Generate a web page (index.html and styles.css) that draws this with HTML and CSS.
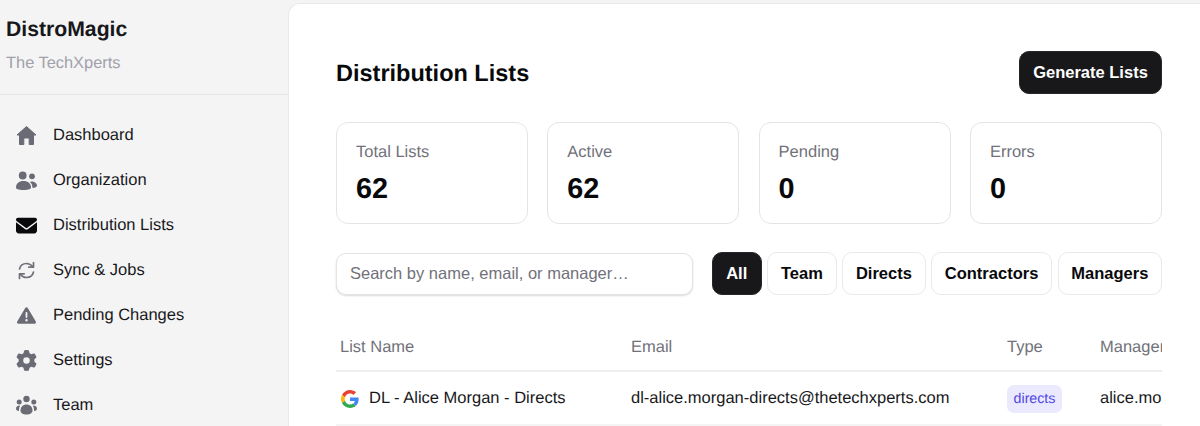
FILE: index.html
```html
<!DOCTYPE html>
<html lang="en">
<head>
<meta charset="utf-8">
<title>DistroMagic</title>
<link rel="stylesheet" href="styles.css">
</head>
<body>
<div class="app">
  <aside class="sidebar">
    <div class="brand">
      <div class="brand-name">DistroMagic</div>
      <div class="brand-org">The TechXperts</div>
    </div>
    <nav class="nav">
      <a class="nav-item"><svg class="icon" viewBox="0 0 21 21"><path class="fill house" d="M10.500 1.500 20 10h-2.500v9.500h-4.300V13H7.800v6.500H3.500V10H1z"/></svg><span>Dashboard</span></a>
      <a class="nav-item"><svg class="icon" viewBox="0 0 21 21"><circle class="fill" cx="6.700" cy="5.500" r="3.900"/><circle class="fill" cx="16" cy="6.300" r="2.900"/><path class="fill" d="M0 17.500C0 13.500 3 11 7.500 11S15 13.500 15 17.500C15 19 13 20 7.500 20S0 19 0 17.500Z"/><path class="fill" d="M15.500 11.500C18.500 11.500 21 13.500 21 15.500 21 17 19 18 16.500 18 16.500 15 15.500 13 13.800 12 14.300 11.700 15 11.500 15.500 11.500Z"/></svg><span>Organization</span></a>
      <a class="nav-item"><svg class="icon icon-dark" viewBox="0 0 512 512"><path d="M48 64C21.500 64 0 85.500 0 112c0 15.100 7.100 29.300 19.200 38.400L236.800 313.600c11.400 8.500 27 8.500 38.400 0L492.800 150.400c12.100-9.100 19.200-23.300 19.200-38.400c0-26.500-21.500-48-48-48H48zM0 176V384c0 35.300 28.700 64 64 64H448c35.300 0 64-28.700 64-64V176L294.400 339.200c-22.800 17.100-54 17.100-76.800 0L0 176z"/></svg><span>Distribution Lists</span></a>
      <a class="nav-item"><svg class="icon icon-line" viewBox="0 0 21 21"><path d="M3.500 9C4.300 5.500 7 3.500 10.500 3.500 13 3.500 15 4.500 16.800 6.800"/><path d="M17.500 2.500v4.700h-4.700"/><path d="M17.500 12C16.700 15.500 14 17.500 10.500 17.500 8 17.500 6 16.500 4.200 14.200"/><path d="M3.500 18.500v-4.700h4.700"/></svg><span>Sync &amp; Jobs</span></a>
      <a class="nav-item"><svg class="icon icon-tri" viewBox="0 0 512 512"><path class="fill" d="M256 32c14.200 0 27.300 7.500 34.500 19.800l216 368c7.300 12.400 7.300 27.700 .2 40.100S486.300 480 472 480H40c-14.300 0-27.600-7.700-34.700-20.100s-7-27.800 .2-40.100l216-368C228.700 39.500 241.800 32 256 32zm0 128c-13.300 0-24 10.700-24 24V296c0 13.300 10.700 24 24 24s24-10.700 24-24V184c0-13.300-10.700-24-24-24zm32 224a32 32 0 1 0 -64 0 32 32 0 1 0 64 0z"/></svg><span>Pending Changes</span></a>
      <a class="nav-item"><svg class="icon" viewBox="0 0 512 512"><path class="fill" d="M495.900 166.600c3.200 8.700 .5 18.400-6.400 24.600l-43.300 39.400c1.100 8.300 1.700 16.800 1.700 25.400s-.6 17.100-1.700 25.400l43.300 39.400c6.900 6.200 9.600 15.900 6.400 24.600c-4.400 11.900-9.700 23.300-15.800 34.300l-4.700 8.100c-6.600 11-14 21.400-22.100 31.200c-5.900 7.200-15.700 9.600-24.500 6.800l-55.700-17.700c-13.400 10.300-28.200 18.900-44 25.400l-12.500 57.100c-2 9.100-9 16.300-18.200 17.800c-13.800 2.300-28 3.500-42.500 3.500s-28.700-1.200-42.500-3.500c-9.200-1.500-16.200-8.700-18.200-17.800l-12.500-57.100c-15.800-6.500-30.600-15.100-44-25.400L83.100 425.900c-8.800 2.800-18.600 .3-24.500-6.800c-8.100-9.800-15.500-20.200-22.100-31.200l-4.700-8.100c-6.100-11-11.400-22.400-15.800-34.300c-3.200-8.700-.5-18.400 6.400-24.600l43.300-39.400C64.600 273.100 64 264.600 64 256s.6-17.100 1.700-25.400L22.400 191.200c-6.900-6.200-9.600-15.900-6.400-24.600c4.400-11.900 9.700-23.300 15.800-34.300l4.700-8.100c6.600-11 14-21.400 22.100-31.200c5.900-7.200 15.700-9.600 24.500-6.800l55.700 17.700c13.400-10.300 28.200-18.900 44-25.400l12.500-57.100c2-9.100 9-16.300 18.200-17.800C227.300 1.200 241.500 0 256 0s28.700 1.200 42.500 3.500c9.200 1.500 16.200 8.700 18.200 17.800l12.500 57.100c15.800 6.500 30.600 15.100 44 25.400l55.700-17.700c8.800-2.800 18.600-.3 24.500 6.800c8.100 9.800 15.500 20.200 22.100 31.200l4.700 8.100c6.100 11 11.400 22.400 15.800 34.300zM256 336a80 80 0 1 0 0-160 80 80 0 1 0 0 160z"/></svg><span>Settings</span></a>
      <a class="nav-item"><svg class="icon" viewBox="0 0 21 21"><circle class="fill" cx="10.500" cy="4" r="3.200"/><circle class="fill" cx="3.200" cy="7" r="2.500"/><circle class="fill" cx="17.800" cy="7" r="2.500"/><path class="fill" d="M4.500 15.500C4.500 11.800 7 9.500 10.500 9.500S16.500 11.800 16.500 15.500C16.500 18 14 19.500 10.500 19.500S4.500 18 4.500 15.500Z"/><path class="fill" d="M0 13.500C0 11.500 1.500 10.500 4.200 10.500 3.300 12 2.900 13.800 3 16 1 15.800 0 15 0 13.500Z"/><path class="fill" d="M21 13.500C21 11.500 19.500 10.500 16.800 10.500 17.700 12 18.100 13.800 18 16 20 15.800 21 15 21 13.500Z"/></svg><span>Team</span></a>
    </nav>
  </aside>
  <main class="main">
    <header class="page-head">
      <h1 class="title">Distribution Lists</h1>
      <button class="btn-primary" type="button">Generate Lists</button>
    </header>
    <section class="stats">
      <div class="stat"><div class="stat-label">Total Lists</div><div class="stat-value">62</div></div>
      <div class="stat"><div class="stat-label">Active</div><div class="stat-value">62</div></div>
      <div class="stat"><div class="stat-label">Pending</div><div class="stat-value">0</div></div>
      <div class="stat"><div class="stat-label">Errors</div><div class="stat-value">0</div></div>
    </section>
    <section class="toolbar">
      <input class="search" type="text" placeholder="Search by name, email, or manager…">
      <div class="filters">
        <button class="filter filter-on" type="button">All</button>
        <button class="filter" type="button">Team</button>
        <button class="filter" type="button">Directs</button>
        <button class="filter" type="button">Contractors</button>
        <button class="filter" type="button">Managers</button>
      </div>
    </section>
    <div class="table-wrap">
      <table class="table">
        <colgroup><col class="c-name"><col class="c-email"><col class="c-type"><col class="c-mgr"></colgroup>
        <thead><tr><th>List Name</th><th>Email</th><th>Type</th><th>Manager</th></tr></thead>
        <tbody>
          <tr>
            <td><div class="name-cell"><svg class="g-logo" viewBox="0 0 48 48"><path fill="#EA4335" d="M24 9.500c3.540 0 6.710 1.220 9.210 3.600l6.850-6.850C35.900 2.380 30.470 0 24 0 14.620 0 6.510 5.380 2.560 13.220l7.980 6.190C12.430 13.720 17.740 9.500 24 9.500z"/><path fill="#4285F4" d="M46.980 24.550c0-1.570-.15-3.090-.38-4.550H24v9.020h12.940c-.58 2.960-2.260 5.480-4.780 7.180l7.730 6c4.510-4.180 7.090-10.360 7.090-17.650z"/><path fill="#FBBC05" d="M10.530 28.590c-.48-1.450-.76-2.990-.76-4.590s.27-3.140.76-4.590l-7.980-6.190C.92 16.460 0 20.120 0 24c0 3.880.92 7.540 2.560 10.780l7.970-6.190z"/><path fill="#34A853" d="M24 48c6.480 0 11.930-2.130 15.890-5.810l-7.730-6c-2.150 1.450-4.920 2.300-8.160 2.300-6.260 0-11.570-4.220-13.470-9.910l-7.980 6.190C6.510 42.620 14.620 48 24 48z"/></svg><span>DL - Alice Morgan - Directs</span></div></td>
            <td>dl-alice.morgan-directs@thetechxperts.com</td>
            <td><span class="badge">directs</span></td>
            <td>alice.morgan@thetechxperts.com</td>
          </tr>
        </tbody>
      </table>
    </div>
  </main>
</div>
</body>
</html>
```
FILE: styles.css
```css
* { box-sizing: border-box; }
html, body { margin: 0; height: 100%; overflow: hidden; }
body {
  background: #f4f4f5;
  color: #18181b;
  font-family: "Liberation Sans", Arial, sans-serif;
  text-rendering: geometricPrecision;
}
.app { display: flex; height: 426px; }
.sidebar { width: 288px; flex: none; }
.brand { height: 95px; padding: 17px 6px 0; border-bottom: 1px solid #e4e4e7; }
.brand-name { font-size: 21.200px; font-weight: 700; line-height: 26px; }
.brand-org { font-size: 16.400px; line-height: 20px; margin-top: 10px; color: #a1a1aa; }
.nav { display: flex; flex-direction: column; padding: 18px 16px 0; }
.nav-item { display: flex; align-items: center; gap: 16px; height: 45px; font-size: 16.500px; color: #18181b; }
.icon { width: 21px; height: 21px; flex: none; }
.icon-tri { width: 19px; height: 19px; margin: 0 1px; }
.fill { fill: #6b6b76; }
.house { stroke: #6b6b76; stroke-width: 1; stroke-linejoin: round; }
.icon-dark { fill: #09090b; }
.icon-line { fill: none; stroke: #71717a; stroke-width: 1.700; stroke-linecap: round; stroke-linejoin: round; }
.main {
  flex: 1;
  min-width: 0;
  margin-top: 3px;
  padding: 47px 38px 0 47px;
  background: #fff;
  border: 1px solid #e9e9eb;
  border-width: 1px 0 0 1px;
  border-top-left-radius: 12px;
  overflow: hidden;
}
.page-head { display: flex; justify-content: space-between; align-items: center; height: 43px; }
.title { margin: 1px 0 0; font-size: 23.500px; font-weight: 700; color: #09090b; }
.btn-primary {
  height: 43px;
  width: 143px;
  border: 1px solid #27272a;
  border-radius: 10px;
  background: #18181b;
  color: #fff;
  font: 700 16.500px "Liberation Sans", Arial, sans-serif;
}
.stats { display: grid; grid-template-columns: repeat(4, 1fr); gap: 19.200px; margin-top: 28px; }
.stat { height: 102px; padding: 19px; border: 1px solid #e4e4e7; border-radius: 12px; }
.stat-label { font-size: 16.500px; line-height: 20px; color: #71717a; }
.stat-value { margin-top: 11px; font-size: 28.800px; line-height: 33px; font-weight: 700; color: #09090b; }
.toolbar { display: flex; align-items: center; justify-content: space-between; margin-top: 28px; }
.search {
  width: 357px;
  height: 42px;
  padding: 0 13px;
  border: 1px solid #e4e4e7;
  border-radius: 10px;
  background: #fff;
  box-shadow: 0 1px 2px rgba(0, 0, 0, .15);
  font: 16.500px "Liberation Sans", Arial, sans-serif;
  color: #18181b;
}
.search::placeholder { color: #71717a; opacity: 1; }
.filters { display: flex; gap: 5.600px; }
.filter {
  height: 43px;
  padding: 0 12.700px;
  border: 1px solid #e9e9eb;
  border-radius: 10px;
  background: #fff;
  color: #09090b;
  font: 700 16.500px "Liberation Sans", Arial, sans-serif;
}
.filter-on { width: 50px; background: #18181b; border-color: #27272a; color: #fff; }
.table-wrap { margin-top: 29px; overflow: hidden; }
.table { border-collapse: collapse; table-layout: fixed; width: 1060px; font-size: 16.500px; }
.c-name { width: 291px; }
.c-email { width: 376px; }
.c-type { width: 93px; }
.c-mgr { width: 300px; }
th { height: 47px; padding: 0 4px; text-align: left; font-weight: 400; color: #71717a; border-bottom: 2px solid #eeeeef; }
td { height: 54px; padding: 1px 4px 0; white-space: nowrap; overflow: hidden; color: #18181b; border-bottom: 2px solid #f4f4f5; }
.name-cell { display: flex; align-items: center; gap: 10px; }
.g-logo { width: 18px; height: 18px; flex: none; margin-left: 1px; }
.badge { display: inline-block; padding: 0 6.600px; line-height: 28px; border-radius: 7px; background: #ebe9fe; color: #4f46e5; font-size: 14.200px; vertical-align: 1px; }
```
